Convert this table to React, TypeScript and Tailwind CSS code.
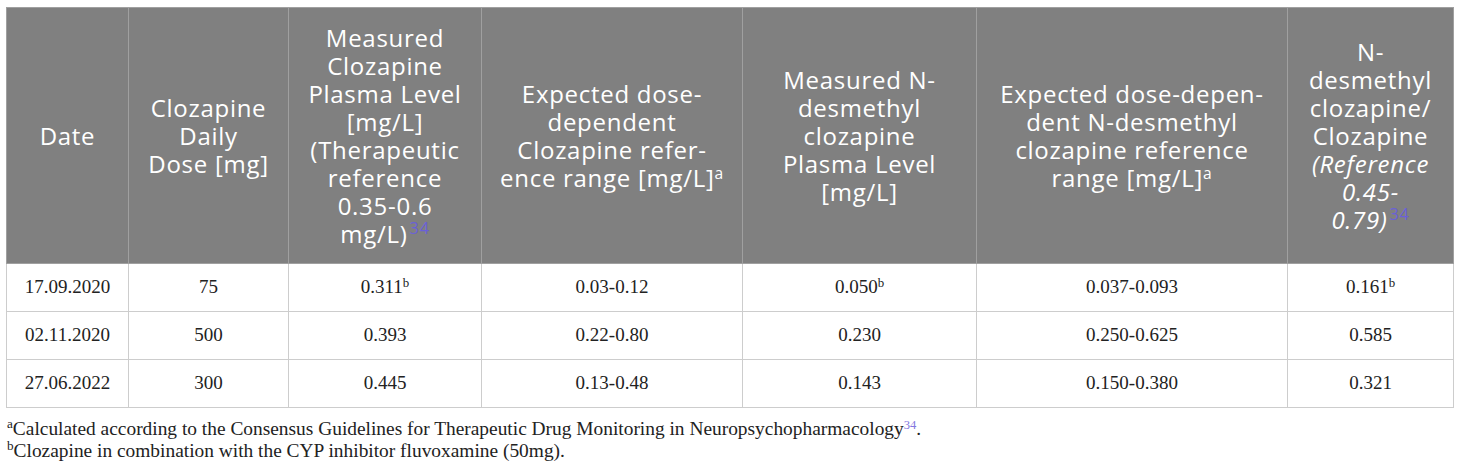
const headFont = { fontFamily: '"Open Sans", "Liberation Sans", sans-serif' };

function Ref({ n }: { n: string }) {
  return <sup className="text-[#6a60d8] text-[0.68em] ml-[2px] not-italic">{n}</sup>;
}

function Fn({ n }: { n: string }) {
  return <sup className="text-[0.68em]">{n}</sup>;
}

const rows = [
  { date: "17.09.2020", dose: "75", level: "0.311", levelB: true, exp: "0.03-0.12", nd: "0.050", ndB: true, ndExp: "0.037-0.093", ratio: "0.161", ratioB: true },
  { date: "02.11.2020", dose: "500", level: "0.393", exp: "0.22-0.80", nd: "0.230", ndExp: "0.250-0.625", ratio: "0.585" },
  { date: "27.06.2022", dose: "300", level: "0.445", exp: "0.13-0.48", nd: "0.143", ndExp: "0.150-0.380", ratio: "0.321" },
];

export default function App() {
  const th = "border border-[#a0a0a0] bg-[#808080] text-white font-normal text-center align-middle px-0 text-[24px] leading-[28px] tracking-[0.03em] whitespace-nowrap";
  const td = "border border-[#cdcdcd] text-center align-middle h-[48px] p-0 text-[19px] text-[#222]";

  return (
    <div className="w-[1460px] h-[470px] bg-white pl-[6px] pt-[7px]" style={{ fontFamily: '"Liberation Serif", serif' }}>
      <table className="table-fixed border-collapse w-[1447px]">
        <colgroup>
          <col className="w-[122px]" />
          <col className="w-[160px]" />
          <col className="w-[193px]" />
          <col className="w-[261px]" />
          <col className="w-[234px]" />
          <col className="w-[311px]" />
          <col className="w-[166px]" />
        </colgroup>
        <thead style={headFont}>
          <tr className="h-[256px]">
            <th className={th}>Date</th>
            <th className={th}>Clozapine<br />Daily<br />Dose [mg]</th>
            <th className={th}>
              Measured<br />Clozapine<br />Plasma Level<br />[mg/L]<br />(Therapeutic<br />reference<br />0.35-0.6<br />mg/L)<Ref n="34" />
            </th>
            <th className={th}>
              Expected dose-<br />dependent<br />Clozapine refer-<br />ence range [mg/L]<sup className="text-[0.65em]">a</sup>
            </th>
            <th className={th}>
              Measured N-<br />desmethyl<br />clozapine<br />Plasma Level<br />[mg/L]
            </th>
            <th className={th}>
              Expected dose-depen-<br />dent N-desmethyl<br />clozapine reference<br />range [mg/L]<sup className="text-[0.65em]">a</sup>
            </th>
            <th className={th}>
              N-<br />desmethyl<br />clozapine/<br />Clozapine<br />
              <i>(Reference<br />0.45-<br />0.79)</i><Ref n="34" />
            </th>
          </tr>
        </thead>
        <tbody>
          {rows.map((r) => (
            <tr key={r.date}>
              <td className={td}>{r.date}</td>
              <td className={td}>{r.dose}</td>
              <td className={td}>{r.level}{r.levelB && <Fn n="b" />}</td>
              <td className={td}>{r.exp}</td>
              <td className={td}>{r.nd}{r.ndB && <Fn n="b" />}</td>
              <td className={td}>{r.ndExp}</td>
              <td className={td}>{r.ratio}{r.ratioB && <Fn n="b" />}</td>
            </tr>
          ))}
        </tbody>
      </table>
      <div className="text-[19.4px] leading-[22px] text-[#222] mt-[10px] pl-[1px]">
        <p><Fn n="a" />Calculated according to the Consensus Guidelines for Therapeutic Drug Monitoring in Neuropsychopharmacology<sup className="text-[#8378e0] text-[0.65em]">34</sup>.</p>
        <p><Fn n="b" />Clozapine in combination with the CYP inhibitor fluvoxamine (50mg).</p>
      </div>
    </div>
  );
}
